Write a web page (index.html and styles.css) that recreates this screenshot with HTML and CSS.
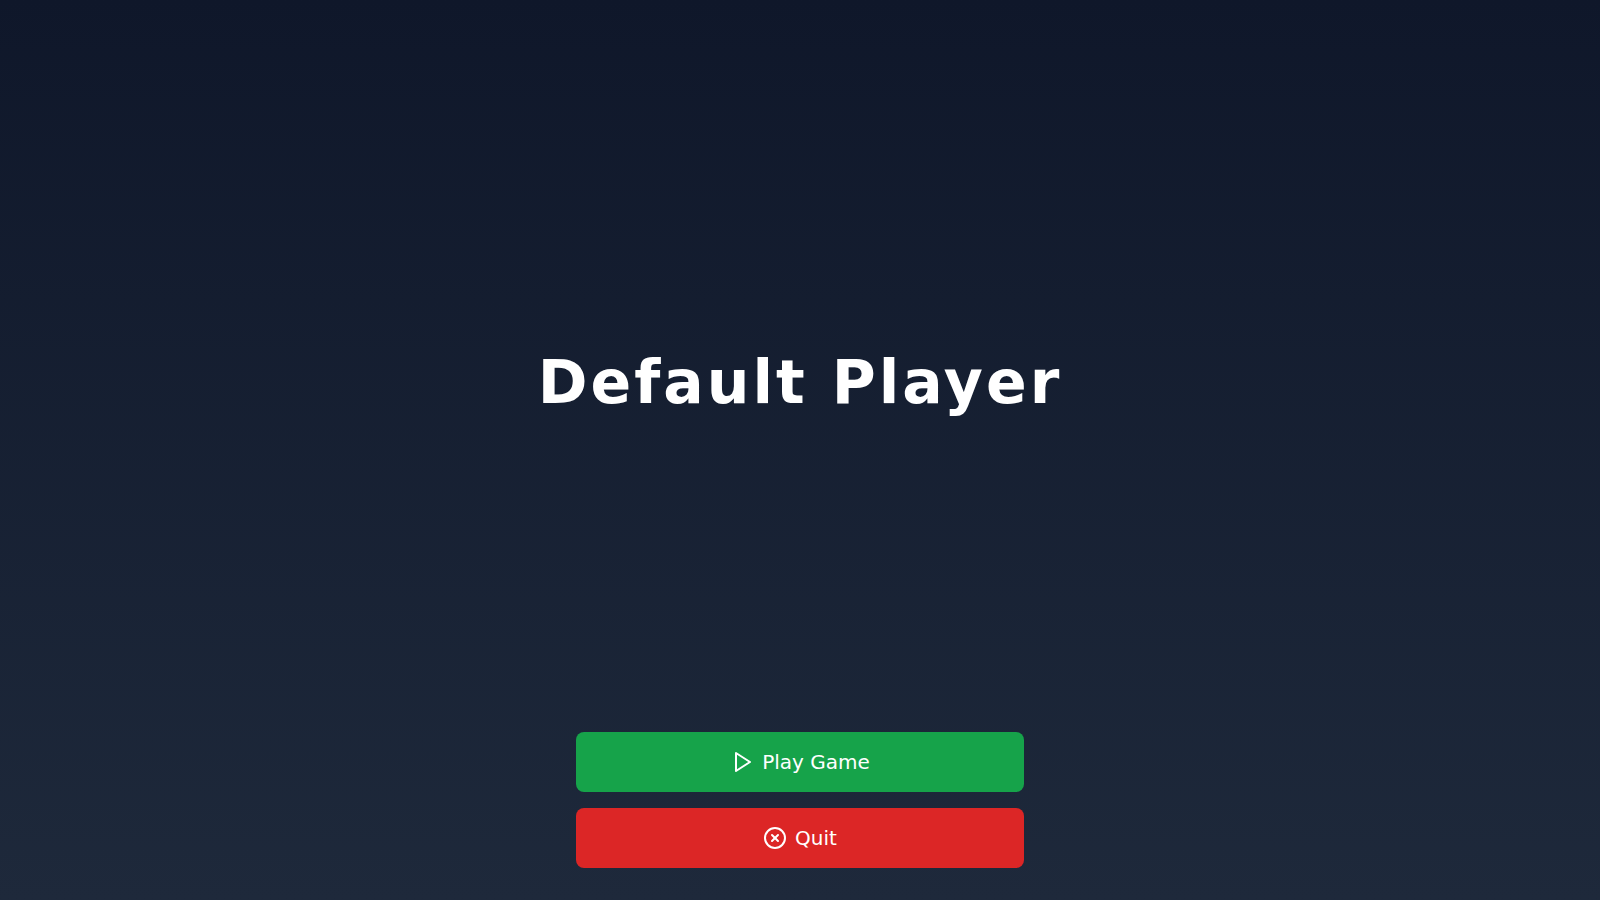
FILE: index.html
```html
<!DOCTYPE html>
<html lang="en">
<head>
<meta charset="utf-8">
<title>Default Player</title>
<link rel="stylesheet" href="styles.css">
</head>
<body>
<div class="screen">
  <main class="hero"><h1 class="player-name">Default Player</h1></main>
  <div class="actions">
    <button class="button button-play">
      <svg class="icon" viewBox="0 0 24 24"><polygon points="6 3 20 12 6 21 6 3"/></svg>
      <span>Play Game</span>
    </button>
    <button class="button button-quit">
      <svg class="icon" viewBox="0 0 24 24"><circle cx="12" cy="12" r="10"/><path d="m15 9-6 6"/><path d="m9 9 6 6"/></svg>
      <span>Quit</span>
    </button>
  </div>
</div>
</body>
</html>
```
FILE: styles.css
```css
* { box-sizing: border-box; }
body {
  margin: 0;
  font-family: "DejaVu Sans", sans-serif;
  color: #fff;
}
.screen {
  height: 100vh;
  display: flex;
  flex-direction: column;
  align-items: center;
  padding: 32px;
  background: linear-gradient(to bottom, #0f172a, #1e293b);
}
.hero {
  flex: 1;
  display: flex;
  align-items: center;
  justify-content: center;
}
.player-name {
  margin: 0;
  font-size: 60px;
  line-height: 1;
  font-weight: 700;
  letter-spacing: 0.05em;
}
.actions {
  width: 448px;
  display: flex;
  flex-direction: column;
  gap: 16px;
}
.button {
  height: 60px;
  display: flex;
  align-items: center;
  justify-content: center;
  gap: 8px;
  padding: 16px 24px;
  border: 0;
  border-radius: 8px;
  font: 20px/28px "DejaVu Sans", sans-serif;
  color: #fff;
}
.button-play { background: #16a34a; }
.button-quit { background: #dc2626; }
.icon {
  width: 24px;
  height: 24px;
  fill: none;
  stroke: currentColor;
  stroke-width: 2;
  stroke-linecap: round;
  stroke-linejoin: round;
}
```
